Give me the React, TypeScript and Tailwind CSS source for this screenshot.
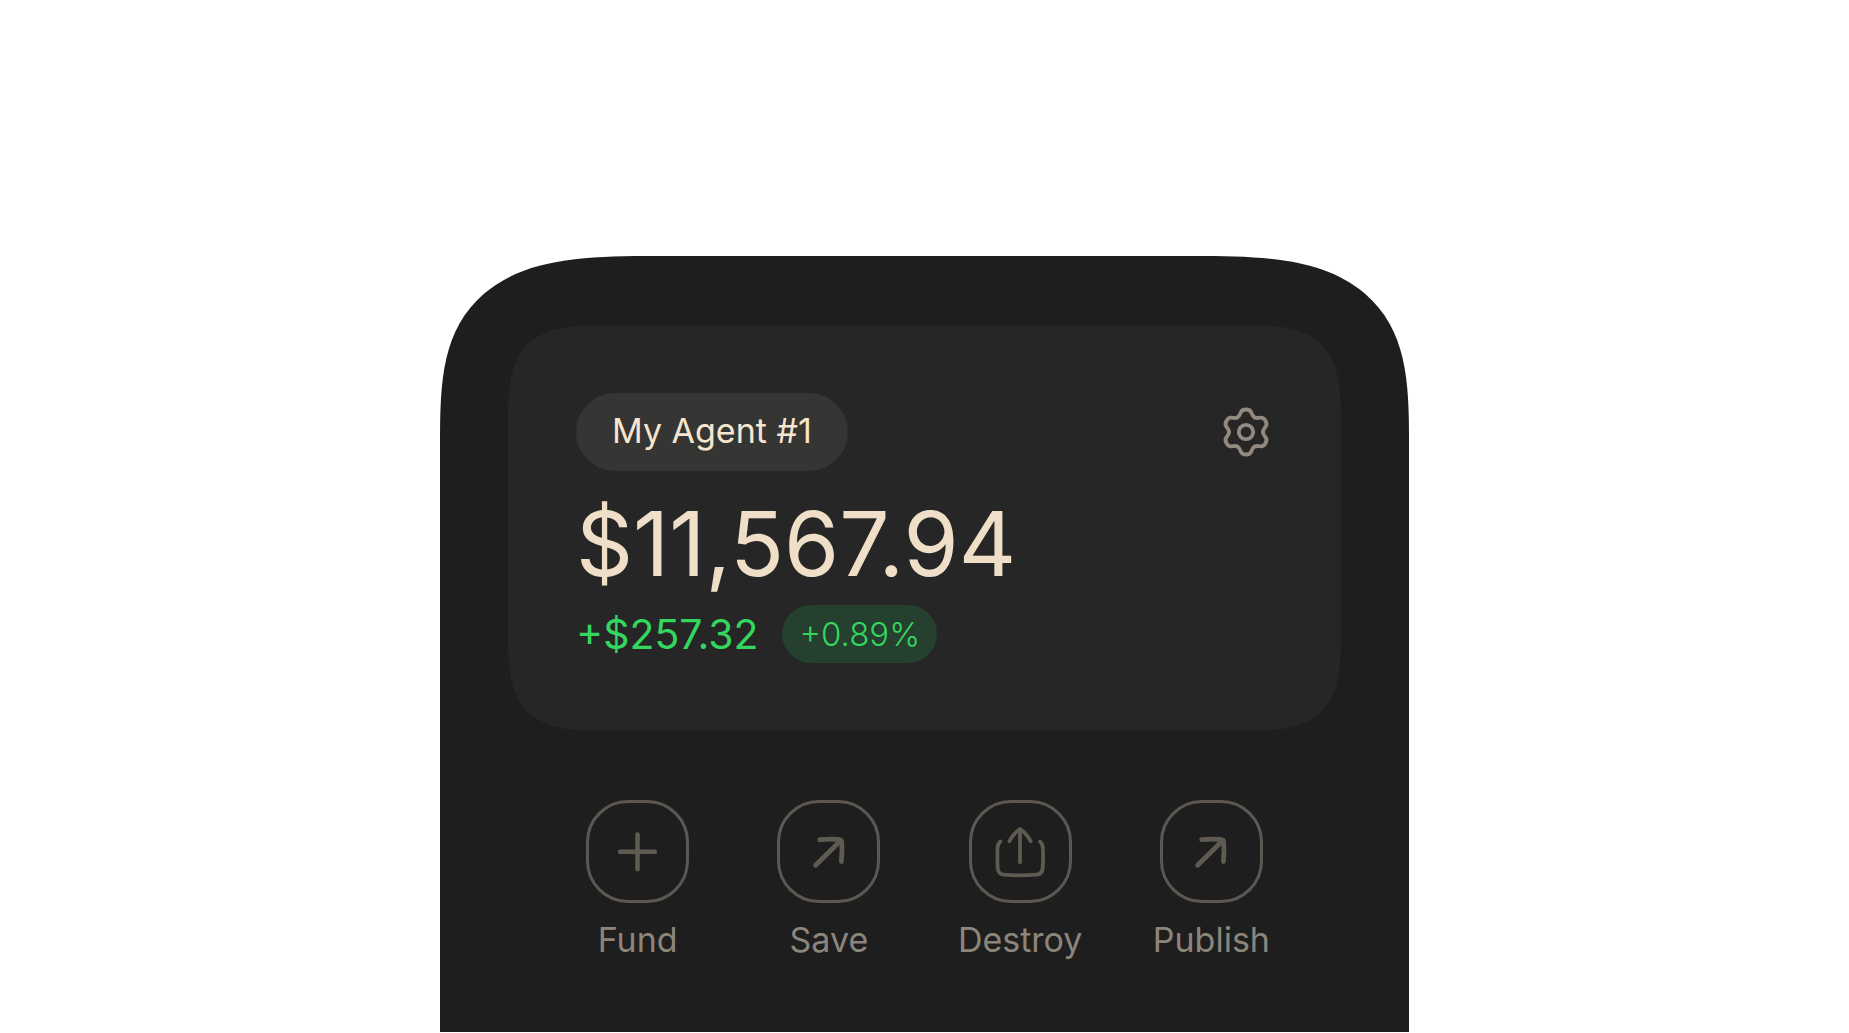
import React from 'react';

type IconProps = { className?: string };

const LOBES = [0, 60, 120, 180, 240, 300];

const GearIcon = ({ className }: IconProps) => (
    <svg viewBox="-27 -27 54 54" fill="none" stroke="currentColor" strokeWidth="3.8" strokeLinecap="round" className={className} aria-hidden="true">
        {LOBES.map((deg) => (
            <path
                key={deg}
                transform={`rotate(${deg})`}
                d="M-8.5 -14.7C-6.4 -15.9 -5.9 -17.6 -5.2 -19.6C-4.4 -21.8 -3 -22.5 0 -22.5C3 -22.5 4.4 -21.8 5.2 -19.6C5.9 -17.6 6.4 -15.9 8.5 -14.7"
            />
        ))}
        <circle r="7.2" />
    </svg>
);

const PlusIcon = ({ className }: IconProps) => (
    <svg viewBox="0 0 40 40" fill="none" stroke="currentColor" strokeWidth="4.6" strokeLinecap="round" className={className} aria-hidden="true">
        <path d="M19.5 2.5V37.2M2.2 19.8H36.8" />
    </svg>
);

const ArrowIcon = ({ className }: IconProps) => (
    <svg viewBox="0 0 40 40" fill="none" stroke="currentColor" strokeWidth="4.8" strokeLinecap="round" strokeLinejoin="round" className={className} aria-hidden="true">
        <path d="M6.6 33.3L32 8.3" />
        <path d="M10.7 7.6C19 7 26 7 30 7.5Q32.4 8 32.7 10.4C33.1 15 33.1 22 32.4 29.5" />
    </svg>
);

const ShareIcon = ({ className }: IconProps) => (
    <svg viewBox="0 0 52 52" fill="none" stroke="currentColor" strokeWidth="3.8" strokeLinecap="round" strokeLinejoin="round" className={className} aria-hidden="true">
        <path d="M26 3.4V36.2" />
        <path d="M15.4 15.2C18 10.4 21.4 5.8 26 3.2C30.6 5.8 34 10.4 36.7 15.2" />
        <path d="M6.4 15.6C4 17.4 3.6 19.4 3.5 22.5C3.3 29 3.3 35 3.7 42C4 46.4 6 48.4 9.9 48.7C19.4 49.4 32.4 49.4 42.4 48.7C46.4 48.4 48.4 46.4 48.7 42C49.2 35 49.2 29 48.9 22.5C48.8 19.4 48.2 17.4 46 15.6" />
    </svg>
);

const ACTIONS = [
    { label: 'Fund', icon: <PlusIcon className="size-10" /> },
    { label: 'Save', icon: <ArrowIcon className="size-10" /> },
    { label: 'Destroy', icon: <ShareIcon className="size-[52px]" /> },
    { label: 'Publish', icon: <ArrowIcon className="size-10" /> },
];

const BalanceCard = () => (
    <section className="rounded-[105px] [corner-shape:superellipse(1.75)] bg-[#262626] p-[68px]">
        <div className="flex items-center justify-between">
            <h1 className="rounded-full bg-[#353533] px-9 pt-[18px] pb-5 text-[34px] leading-[40px] text-[#f7e6cf]">
                My Agent #1
            </h1>
            <button type="button" aria-label="Settings" className="text-[#928a81]">
                <GearIcon className="size-[54px]" />
            </button>
        </div>

        <p className="mt-[22px] mb-[10px] text-[89px] leading-[102px] text-[#efdfc8]">$11,567.94</p>

        <div className="flex items-center gap-6 text-[#33d65f]">
            <span className="text-[41px] leading-[58px]">+$257.32</span>
            <span className="rounded-full bg-[#25402f] px-[17px] text-[33px] leading-[58px] font-light">+0.89%</span>
        </div>
    </section>
);

const App = () => {
    return (
        <main className="flex min-h-screen justify-center bg-white pt-64 font-['Inter',sans-serif]">
            <div className="w-full max-w-[969px] self-start [border-top-left-radius:215px_185px] [border-top-right-radius:215px_185px] [corner-shape:superellipse(1.6)] bg-[#1e1e1e] px-[68px] pt-[69px] pb-[72px]">
                <BalanceCard />

                {/* Quick actions */}
                <div className="mt-[69px] grid grid-cols-4 px-[34px]">
                    {ACTIONS.map(({ label, icon }) => (
                        <button key={label} type="button" className="flex flex-col items-center gap-[17px]">
                            <span className="flex size-[103px] items-center justify-center rounded-[42px] border-3 border-[#5c5750] text-[#5f5a52]">
                                {icon}
                            </span>
                            <span className="text-[34px] leading-[40px] text-[#8c857c]">{label}</span>
                        </button>
                    ))}
                </div>
            </div>
        </main>
    );
};

export default App;
